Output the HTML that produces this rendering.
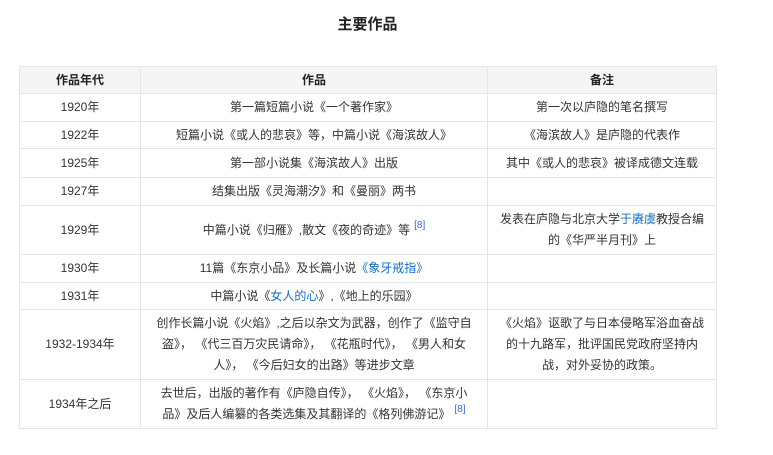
<!DOCTYPE html>
<html><head><meta charset="utf-8"><style>
html,body{margin:0;padding:0;background:#fff;width:773px;height:455px;overflow:hidden}
body{font-family:"Liberation Sans","Noto Sans CJK SC",sans-serif;color:#333;font-size:12px}
h2{position:absolute;left:0;width:735px;top:13px;margin:0;text-align:center;font-size:15px;font-weight:bold;color:#222}
table{position:absolute;left:19px;top:66px;border-collapse:collapse;table-layout:fixed;width:697px}
td,th{border:1px solid #e6e6e6;text-align:center;padding:0 8px;line-height:21px}
td.w{padding:0 13px}
th{background:#f5f5f5;font-weight:bold;height:26px;color:#222}
a{color:#136ec2;text-decoration:none}
sup{color:#3366cc;font-size:10px;vertical-align:6px;margin-left:4px;line-height:0}
</style></head><body>
<h2>主要作品</h2>
<table>
<colgroup><col style="width:121px"><col style="width:347px"><col style="width:229px"></colgroup>
<tr><th>作品年代</th><th>作品</th><th>备注</th></tr>
<tr style="height:28px"><td>1920年</td><td>第一篇短篇小说《一个著作家》</td><td>第一次以庐隐的笔名撰写</td></tr>
<tr style="height:27px"><td>1922年</td><td>短篇小说《或人的悲哀》等，中篇小说《海滨故人》</td><td>《海滨故人》是庐隐的代表作</td></tr>
<tr style="height:29px"><td>1925年</td><td>第一部小说集《海滨故人》出版</td><td>其中《或人的悲哀》被译成德文连载</td></tr>
<tr style="height:28px"><td>1927年</td><td>结集出版《灵海潮汐》和《曼丽》两书</td><td></td></tr>
<tr style="height:49px"><td>1929年</td><td>中篇小说《归雁》,散文《夜的奇迹》等<sup>[8]</sup></td><td>发表在庐隐与北京大学<a>于赓虞</a>教授合编的《华严半月刊》上</td></tr>
<tr style="height:28px"><td>1930年</td><td>11篇《东京小品》及长篇小说<a>《象牙戒指》</a></td><td></td></tr>
<tr style="height:27px"><td>1931年</td><td>中篇小说《<a>女人的心</a>》,《地上的乐园》</td><td></td></tr>
<tr style="height:70px"><td>1932-1934年</td><td class="w">创作长篇小说《火焰》,之后以杂文为武器，创作了《监守自盗》，&nbsp;《代三百万灾民请命》，&nbsp;《花瓶时代》，&nbsp;《男人和女人》，&nbsp;《今后妇女的出路》等进步文章</td><td>《火焰》讴歌了与日本侵略军浴血奋战的十九路军，批评国民党政府坚持内战，对外妥协的政策。</td></tr>
<tr style="height:49px"><td>1934年之后</td><td class="w">去世后，出版的著作有《庐隐自传》，&nbsp;《火焰》，&nbsp;《东京小品》及后人编纂的各类选集及其翻译的《格列佛游记》<sup>[8]</sup></td><td></td></tr>
</table>
</body></html>
